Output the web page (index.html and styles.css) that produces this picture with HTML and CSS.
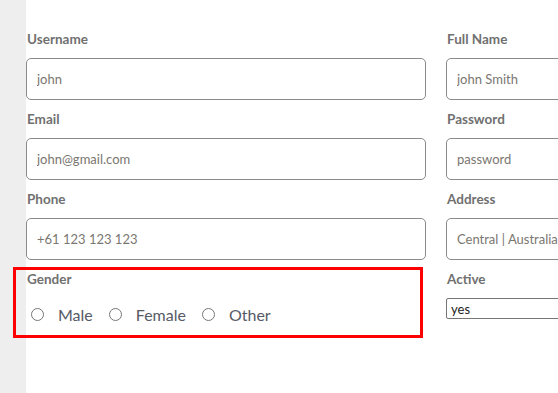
FILE: index.html
```html
<!DOCTYPE html>
<html>
<head>
<meta charset="utf-8">
<link rel="stylesheet" href="styles.css">
</head>
<body>
<div class="sidebar"></div>
<main class="main">
  <form class="form">
    <div class="field">
      <label class="label">Username</label>
      <input class="input" type="text" value="john">
    </div>
    <div class="field">
      <label class="label">Full Name</label>
      <input class="input" type="text" value="john Smith">
    </div>
    <div class="field">
      <label class="label">Email</label>
      <input class="input" type="text" value="john@gmail.com">
    </div>
    <div class="field">
      <label class="label">Password</label>
      <input class="input" type="text" value="password">
    </div>
    <div class="field">
      <label class="label">Phone</label>
      <input class="input" type="text" value="+61 123 123 123">
    </div>
    <div class="field">
      <label class="label">Address</label>
      <input class="input" type="text" value="Central | Australia">
    </div>
    <div class="field gender">
      <label class="label">Gender</label>
      <div class="radios">
        <label class="radio"><input type="radio" name="g"><span>Male</span></label>
        <label class="radio"><input type="radio" name="g"><span>Female</span></label>
        <label class="radio"><input type="radio" name="g"><span>Other</span></label>
      </div>
      <div class="highlight"></div>
    </div>
    <div class="field">
      <label class="label">Active</label>
      <select class="select"><option>yes</option><option>no</option></select>
    </div>
  </form>
</main>
</body>
</html>
```

FILE: styles.css
```css
html, body {
  margin: 0;
  padding: 0;
  background: #fff;
  overflow: hidden;
}
body {
  display: flex;
  min-height: 100vh;
  font-family: Lato, "Liberation Sans", sans-serif;
}
.sidebar {
  width: 26px;
  flex: 0 0 26px;
  background: #eeeeee;
}
.main {
  flex: 1;
  min-width: 0;
  padding-top: 29px;
}
.form {
  display: grid;
  grid-template-columns: 400px 400px;
  column-gap: 20px;
}
.field {
  display: flex;
  flex-direction: column;
  position: relative;
}
.label {
  display: block;
  font-size: 13.5px;
  font-weight: 700;
  line-height: 20px;
  height: 20px;
  margin: 0 0 9px 1px;
  color: #707070;
}
.input {
  box-sizing: border-box;
  height: 42px;
  width: 400px;
  margin: 0 0 9px 0;
  padding: 0 10px;
  border: 1px solid #8a8a8a;
  border-radius: 5px;
  font-family: Lato, "Liberation Sans", sans-serif;
  font-size: 13px;
  color: #7a7670;
  background: #fff;
  outline: none;
}
.radios {
  display: flex;
  align-items: center;
  height: 26px;
  margin-top: 3px;
}
.radio {
  display: flex;
  align-items: center;
  margin-right: 11px;
  font-size: 16px;
  color: #555a66;
}
.radio input {
  width: 13px;
  height: 13px;
  margin: 0 14px 0 5px;
}
.highlight {
  position: absolute;
  left: -13px;
  top: -2px;
  width: 404px;
  height: 65px;
  border: 3px solid #ff0000;
  pointer-events: none;
}
.select {
  box-sizing: border-box;
  width: 400px;
  height: 21px;
  padding: 0;
  border: 1px solid #767676;
  border-radius: 2px;
  background: #fff;
  font-family: Lato, "Liberation Sans", sans-serif;
  font-size: 13px;
  color: #222;
}
```
